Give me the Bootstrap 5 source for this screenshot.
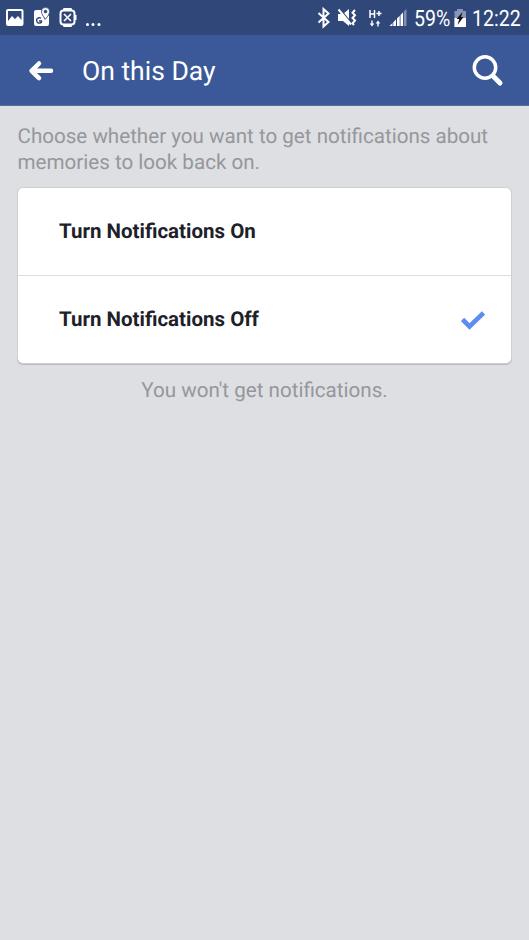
<!DOCTYPE html>
<html lang="en">
<head>
<meta charset="utf-8">
<meta name="viewport" content="width=device-width, initial-scale=1">
<title>On this Day</title>
<link href="https://cdn.jsdelivr.net/npm/bootstrap@5.3.0/dist/css/bootstrap.min.css" rel="stylesheet">
<style>
body{font-family:Roboto,"Liberation Sans",sans-serif;background:#dedfe2;min-height:940px;overflow:hidden;text-rendering:geometricPrecision}
svg{display:block;flex:none}
.statusbar{height:35px;background:#30477a}
.status-text{font-size:22.500px;line-height:35px;white-space:nowrap;padding-top:2px;transform:scaleX(.87);transform-origin:left}
.pct{width:38px;margin-left:3px}
.clock{width:57px}
.appbar{height:71px;background:#3b5998;border-bottom:1px solid #566c9c}
.page-title{font-size:26.500px;line-height:36px;font-weight:400;padding-top:4px;margin-left:-1px}
.muted-copy{color:#95979c;font-size:20.600px;line-height:26px}
.intro{padding:18px 0 0 17.500px;white-space:nowrap}
.options{margin:12px 18px 0;border:0;border-radius:5px;box-shadow:0 0 0 1px #cfd0d3,0 1px 0 1px #b9bac0;--bs-list-group-border-radius:5px}
.option{height:87px;padding:2px 26px 0 41px;border:0;background:#fff;color:#1d2129;font-size:20.500px;font-weight:700}
.option+.option{height:88px;border-top:1px solid #dcdde0!important}
.result-note{margin-top:15px}
</style>
<script src="https://cdn.jsdelivr.net/npm/bootstrap@5.3.0/dist/js/bootstrap.bundle.min.js"></script>
</head>
<body>
<header class="text-white">
<div class="statusbar d-flex justify-content-between">
<svg width="110" height="35" viewBox="0 0 110 35" fill="#fff">
<path fill-rule="evenodd" d="M8 9h13.500a2 2 0 0 1 2 2v13a2 2 0 0 1-2 2H8a2 2 0 0 1-2-2V11a2 2 0 0 1 2-2zM8 11v10l4-5 3 3 3-3 3.500 4v-9z"/>
<path d="M36 10h5c0 4 2 6 4 10l4-5v9a2 2 0 0 1-2 2H36a2 2 0 0 1-2-2V12a2 2 0 0 1 2-2z"/>
<path d="M41 18.300a2.700 2.700 0 1 0 .5 3.700v-1H39" fill="none" stroke="#30477a" stroke-width="1.400"/>
<path fill-rule="evenodd" stroke="#30477a" stroke-width=".6" d="M45.500 7.500a4 4 0 0 1 4 4c0 3-4 7.500-4 7.500s-4-4.500-4-7.500a4 4 0 0 1 4-4zm0 2.500a1.500 1.500 0 1 0 0 3 1.500 1.500 0 0 0 0-3z"/>
<path d="M63.500 8h8l1 3h-10zM62.500 24h10l-1 3h-8zM74.500 15h2v5h-2z"/>
<rect x="60.500" y="10.500" width="14" height="14" rx="3" fill="none" stroke="#fff" stroke-width="2"/>
<path d="M64 14l7 7m0-7l-7 7" stroke="#fff" stroke-width="1.600"/>
<circle cx="87.500" cy="24.500" r="1.500"/><circle cx="93" cy="24.500" r="1.500"/><circle cx="99" cy="24.500" r="1.500"/>
</svg>
<div class="d-flex">
<svg width="96" height="35" viewBox="315 0 96 35" fill="#fff">
<path d="M318.500 13l10 9-5 4.500V9l5 4.500-10 9" fill="none" stroke="#fff" stroke-width="2"/>
<path d="M338 14h5l6-5v17l-6-5h-5z"/>
<path d="M340 9l13 16" stroke="#30477a" stroke-width="1.200"/><path d="M338.500 9.500l12.500 15" stroke="#fff" stroke-width="2"/>
<path d="M355 10l-2.500 2.700 2.500 2.600-2.500 2.700 2.500 2.600-2.500 2.700 1.500 1.700" fill="none" stroke="#fff" stroke-width="2"/>
<path d="M370 10v8m4.500-8v8M370 14h4.500M376.500 13.500h5m-2.500-2.500v5" stroke="#fff" stroke-width="1.500"/>
<path d="M371.300 20.500h1.400v3h1.600l-2.300 3-2.300-3h1.600zM377.300 26.500h1.400v-3h1.600l-2.300-3-2.300 3h1.600z"/>
<path d="M389.500 26l3-3v3zM393.300 22.200l2.700-2.700V26h-2.700zM397 18.500l2.700-2.700V26H397zM400.500 15l2.500-2.500V26h-2.500z"/>
<path d="M403.800 11.500l2.700-2.500v17h-2.700z" opacity=".4"/>
</svg>
<span class="status-text pct">59%</span>
<svg width="20" height="35" viewBox="452 0 20 35">
<path d="M454.500 11h2.500V9h6v2h3v16h-11.500z" fill="#8795b8"/><path d="M454.500 18H466v9h-11.500z" fill="#fff"/>
<path d="M462.500 12l-6 7h2.800l-1.800 6 6-8h-2.500z" fill="#111"/>
</svg>
<span class="status-text clock">12:22</span>
</div>
</div>
<nav class="appbar d-flex align-items-center">
<svg width="83" height="70" viewBox="0 35 83 70" fill="none" stroke="#fff" stroke-width="4.500" stroke-linecap="round" stroke-linejoin="round"><path d="M51 70.800H32M39 63.500l-7.500 7.300 7.500 7.300"/></svg>
<h1 class="page-title mb-0">On this Day</h1>
<svg class="ms-auto" width="69" height="70" viewBox="460 35 69 70" fill="none" stroke="#fff"><circle cx="485" cy="67.500" r="10.700" stroke-width="3.500"/><path d="M493.500 76.500l6.500 6.500" stroke-width="5" stroke-linecap="round"/></svg>
</nav>
</header>
<main>
<p class="muted-copy intro mb-0">Choose whether you want to get notifications about<br>memories to look back on.</p>
<div class="options list-group">
<div class="option list-group-item d-flex align-items-center"><span>Turn Notifications On</span></div>
<div class="option list-group-item d-flex align-items-center justify-content-between"><span>Turn Notifications Off</span>
<svg width="24" height="20" viewBox="461 310 24 20" fill="none" stroke="#5e8cf0" stroke-width="4.600"><path d="M462.500 318.500l7 7 14-13.500"/></svg></div>
</div>
<p class="muted-copy result-note text-center mb-0">You won't get notifications.</p>
</main>
</body>
</html>
